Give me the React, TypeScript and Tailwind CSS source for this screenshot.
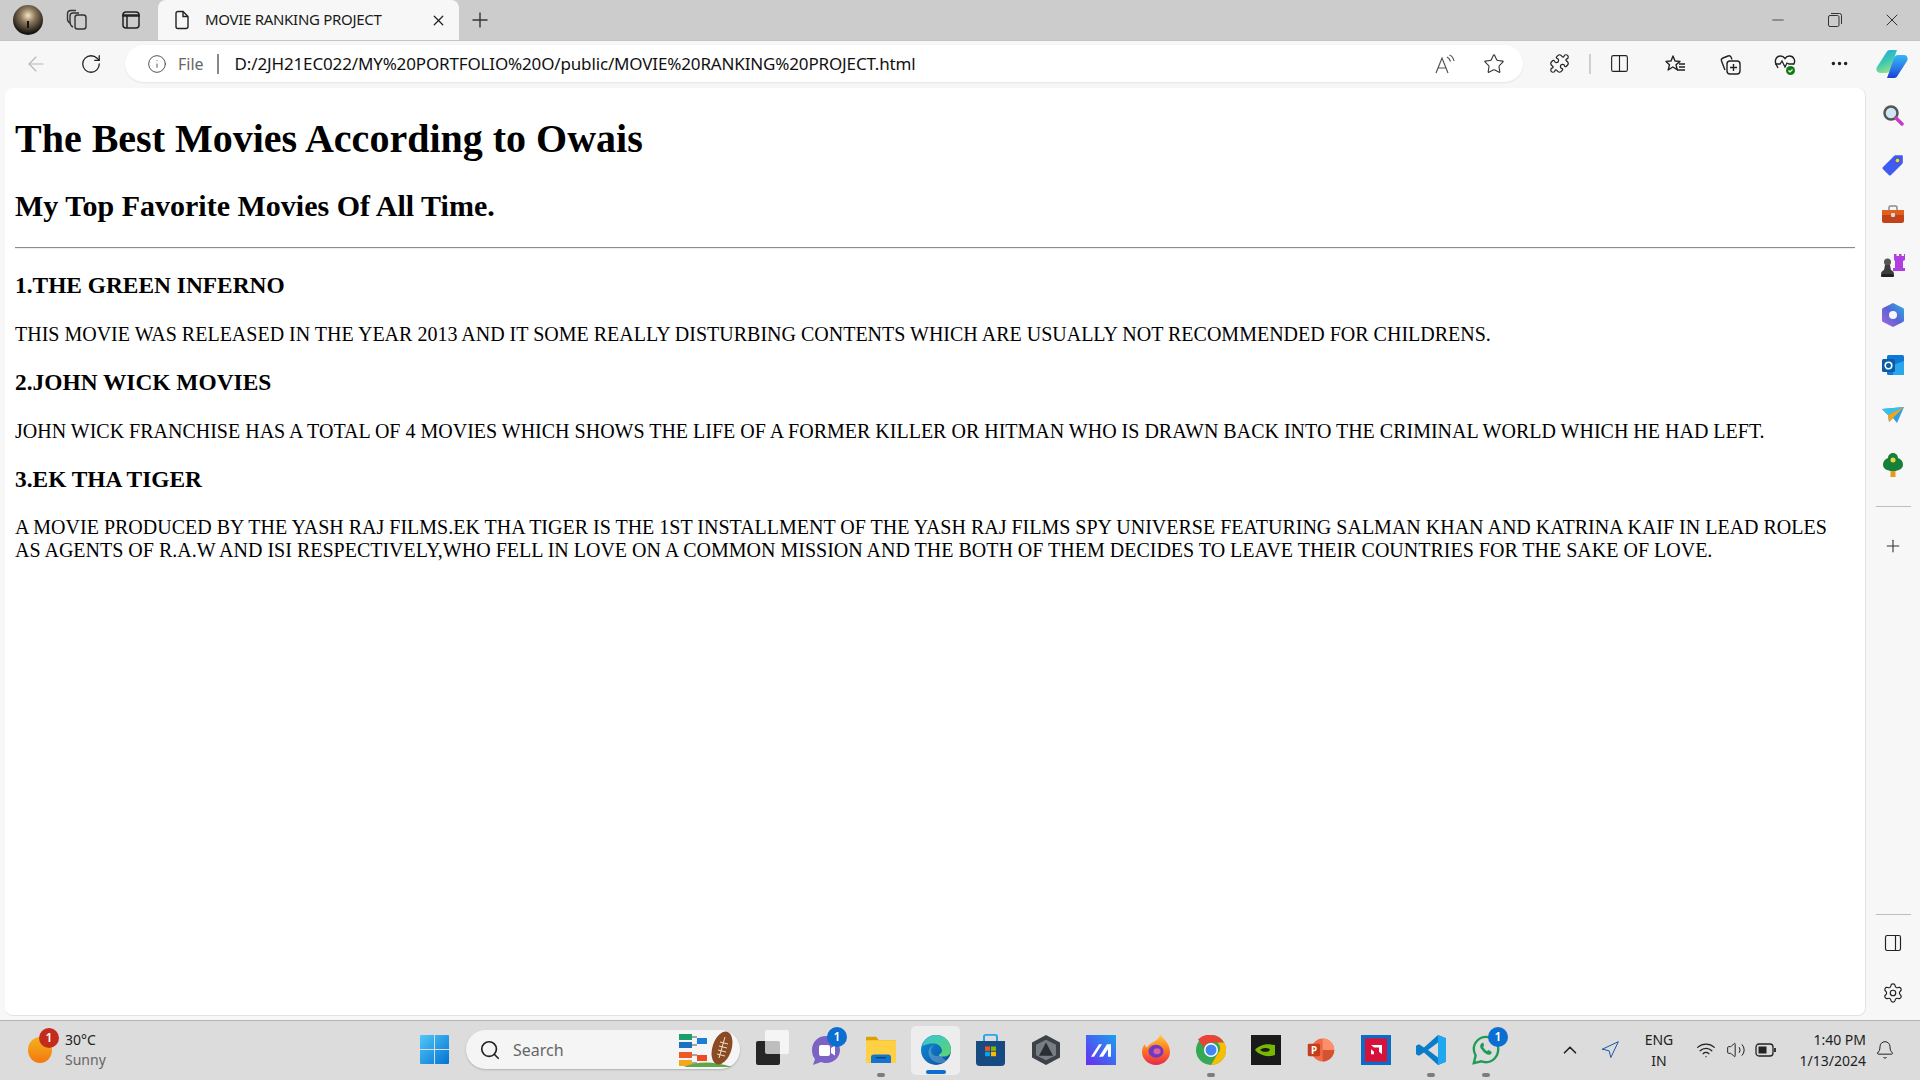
import { ArrowLeft, RotateCw, Info, X, Plus, Minus, Star, Puzzle, Columns2, ChevronUp, Navigation, Wifi, Volume2, Bell, Search, Settings, PanelRight, Ellipsis } from "lucide-react";
import type { ReactNode } from "react";

const ui = "font-['Noto_Sans',sans-serif]";

const Badge = ({ className }: { className: string }) => (
  <span className={`absolute flex h-[20px] w-[20px] items-center justify-center rounded-full text-[12px] font-semibold text-white ${className}`}>1</span>
);

const Slot = ({ w = "w-[55px]", children }: { w?: string; children: ReactNode }) => (
  <div className={`flex h-full shrink-0 items-center justify-center ${w}`}>{children}</div>
);

const Dot = () => <span className="absolute bottom-[1px] left-1/2 h-[4px] w-[8px] -translate-x-1/2 rounded-full bg-[#7d7d7d]" />;

const TaskSlot = ({ children, dot }: { children: ReactNode; dot?: boolean }) => (
  <div className="relative flex h-full w-[55px] shrink-0 items-center justify-center">
    {children}
    {dot && <Dot />}
  </div>
);

const WorkspacesIcon = () => (
  <svg width="24" height="24" viewBox="0 0 24 24" fill="none" stroke="#333" strokeWidth="1.4">
    <rect x="10" y="7" width="11" height="14" rx="2.5" />
    <path d="M8 19c-2-1-3-3-3-5V8c0-2 1-3 3-3h6" />
    <path d="M5 15c-2-1-2.500-2-2.500-4V6c0-2 1-3.500 3.500-3.500h5" />
  </svg>
);

const VerticalTabsIcon = () => (
  <svg width="20" height="20" viewBox="0 0 20 20" fill="none" stroke="#222" strokeWidth="1.5">
    <rect x="2" y="2" width="16" height="16" rx="3" />
    <path d="M2 5h16v1H2z" fill="#222" />
    <path d="M6 6v12" />
  </svg>
);

const PageIcon = () => (
  <svg width="18" height="20" viewBox="0 0 18 20" fill="none" stroke="#222" strokeWidth="1.4">
    <path d="M3 3.500A2 2 0 0 1 5 1.500h5l5 5v10a2 2 0 0 1-2 2H5a2 2 0 0 1-2-2z" />
    <path d="M10 1.500v5h5" />
  </svg>
);

const Avatar = () => (
  <svg width="30" height="30" viewBox="0 0 30 30" className="shrink-0">
    <defs>
      <radialGradient id="av" cx="50%" cy="35%" r="60%">
        <stop offset="0" stopColor="#f6e3c2" />
        <stop offset="0.4" stopColor="#8d7a5f" />
        <stop offset="1" stopColor="#17130e" />
      </radialGradient>
    </defs>
    <ellipse cx="15" cy="15" rx="15" ry="15" fill="url(#av)" />
    <rect x="14" y="16" width="2" height="7" fill="#1a1510" />
  </svg>
);

const ReadAloudIcon = () => (
  <svg width="22" height="22" viewBox="0 0 22 22" fill="none" stroke="#555" strokeWidth="1.2">
    <path d="M2 20 8 5l6 15M4.500 15h7" />
    <path d="M13 4c2 1 3 2.500 3.500 4.500M15.500 2c2.500 1 4 3.500 4.500 6" />
  </svg>
);

const FavListIcon = () => (
  <svg width="22" height="22" viewBox="0 0 22 22" fill="none" stroke="#222" strokeWidth="1.4">
    <path d="M9 3l2 5 5 .4-4 3.300 1.200 5-4.400-2.700-4.600 3 1.300-5.300L2 8.400 7 8z" strokeLinejoin="round" />
    <path d="M15 11h6M15 14h6M13 17h8" />
  </svg>
);

const CollectionsIcon = () => (
  <svg width="22" height="22" viewBox="0 0 22 22" fill="none" stroke="#222" strokeWidth="1.4">
    <rect x="8" y="8" width="13" height="13" rx="3" />
    <path d="M14.500 11v7M11 14.500h7" />
    <path d="M6 17 2.500 8c-.5-1.500.2-2.500 1.500-3l5-2c1.500-.5 2.500 0 3 1l1 2.500" />
  </svg>
);

const HealthIcon = () => (
  <svg width="24" height="24" viewBox="0 0 24 24" fill="none">
    <path d="M5 16 3.500 13C1 9 3 4 7.500 4c2 0 3.500 1 4.500 2.500C13 5 14.500 4 16.500 4 21 4 23 9 20.500 12.500" stroke="#222" strokeWidth="1.4" />
    <path d="M2 12h5l2-3 3 6 2-4 2 1h5" stroke="#222" strokeWidth="1.3" />
    <circle cx="17.500" cy="18.500" r="4.500" fill="#107c10" />
    <path d="M15.500 18.500l1.500 1.500 2.500-2.500" stroke="#fff" strokeWidth="1.200" />
  </svg>
);

const CopilotIcon = () => (
  <svg width="32" height="28" viewBox="0 0 32 28">
    <defs>
      <linearGradient id="cpa" x1="0" y1="0" x2="0.400" y2="1">
        <stop offset="0" stopColor="#1aa3e8" />
        <stop offset="0.6" stopColor="#3fc9b0" />
        <stop offset="1" stopColor="#8fe08a" />
      </linearGradient>
      <linearGradient id="cpb" x1="0.500" y1="0" x2="0.500" y2="1">
        <stop offset="0" stopColor="#35b8f5" />
        <stop offset="0.6" stopColor="#2a76e8" />
        <stop offset="1" stopColor="#1b3fd0" />
      </linearGradient>
    </defs>
    <path d="M10 3c1-2 2-3 4-3h7l-7 20c-1 2-2 3-4 3H4c-3 0-4.500-3-3-6z" fill="url(#cpa)" />
    <path d="M22 25c-1 2-2 3-4 3h-7l7-20c1-2 2-3 4-3h6c3 0 4.500 3 3 6z" fill="url(#cpb)" />
  </svg>
);

const Magnifier = () => (
  <svg width="22" height="22" viewBox="0 0 22 22">
    <circle cx="9" cy="9" r="6.500" fill="#cfe6f5" stroke="#555" strokeWidth="2.500" />
    <path d="M14 14l6 6" stroke="#c43bc4" strokeWidth="3.500" strokeLinecap="round" />
  </svg>
);

const TagIcon = () => (
  <svg width="22" height="22" viewBox="0 0 22 22">
    <path d="M1 13 12 2c.5-.5 1-.7 2-.7h6c.5 0 .8.3.8.8v6c0 1-.2 1.500-.7 2L9 21c-.7.7-1.500.7-2.200 0L1 15.200c-.7-.7-.7-1.500 0-2.200z" fill="#3f5bf2" />
    <circle cx="15.500" cy="6.500" r="2.300" fill="#f5d33a" stroke="#2f3fc0" strokeWidth=".7" />
  </svg>
);

const ToolboxIcon = () => (
  <svg width="24" height="20" viewBox="0 0 24 20">
    <path d="M8 5V2.500C8 1.500 8.500 1 9.500 1h5c1 0 1.500.5 1.500 1.500V5" fill="none" stroke="#8a8a8a" strokeWidth="1.500" />
    <path d="M1 5h22v5H1z" fill="#e2601f" />
    <path d="M1 10h22v6c0 1-1 2-2 2H3c-1 0-2-1-2-2z" fill="#c2431a" />
    <rect x="10" y="8" width="4" height="4" rx="1" fill="#d8d8d8" />
  </svg>
);

const ChessIcon = () => (
  <svg width="24" height="24" viewBox="0 0 24 24">
    <path d="M13 1h2.500v2H18V1h2.500v2H23V1h1v6l-2 1v7h2v3H12v-3h2V8l-1-1z" fill="#b03fe0" />
    <circle cx="6.500" cy="9" r="3.500" fill="#555" />
    <path d="M4 12h5l1 5c2 1 3 2 3 4H0c0-2 1-3 3-4z" fill="#3d3d3d" />
    <rect x="0" y="21" width="13" height="3" rx="1" fill="#222" />
  </svg>
);

const M365Icon = () => (
  <svg width="22" height="24" viewBox="0 0 22 24">
    <defs>
      <linearGradient id="m3" x1="0" y1="1" x2="1" y2="0">
        <stop offset="0" stopColor="#a66bd8" />
        <stop offset="0.5" stopColor="#5a62d8" />
        <stop offset="1" stopColor="#25b5e0" />
      </linearGradient>
    </defs>
    <path d="M11 0 21 5c.7.4 1 1 1 2v10c0 1-.3 1.600-1 2l-10 5L1 19c-.7-.4-1-1-1-2V7c0-1 .3-1.600 1-2z" fill="url(#m3)" />
    <circle cx="11" cy="12" r="4" fill="#f7f7f7" />
  </svg>
);

const OutlookIcon = () => (
  <svg width="22" height="22" viewBox="0 0 22 22">
    <rect x="5" y="1" width="17" height="20" rx="1.500" fill="#0f78d4" />
    <path d="M11 11l11-4v13a1 1 0 0 1-1 1H11z" fill="#28a8ea" />
    <rect x="0" y="5" width="13" height="13" rx="1.500" fill="#0a5ca8" />
    <circle cx="6.500" cy="11.500" r="3.300" fill="none" stroke="#fff" strokeWidth="1.600" />
  </svg>
);

const PlaneIcon = () => (
  <svg width="22" height="16" viewBox="0 0 22 16">
    <path d="M0 2 22 0 15 16l-4-5-4 4-1-7z" fill="#2f9de8" />
    <path d="M0 2 22 0 6 8z" fill="#35c0f0" />
    <path d="M6 8 22 0 7 15z" fill="#f0a51e" />
  </svg>
);

const TreeIcon = () => (
  <svg width="20" height="24" viewBox="0 0 20 24">
    <rect x="7.500" y="16" width="5" height="8" fill="#e79a1a" />
    <path d="M10 0c3 0 5 2.500 5 5 3 1 5 3.500 5 6.500 0 4-3.500 6.500-10 6.500S0 15.500 0 11.500C0 8.500 2 6 5 5c0-2.500 2-5 5-5z" fill="#14803a" />
    <circle cx="10" cy="7" r="2.500" fill="#f5d33a" />
  </svg>
);

const Weather = () => (
  <div className="relative h-[26px] w-[24px] rounded-[50%] bg-gradient-to-b from-[#f2b21e] to-[#f3760f]">
    <Badge className="-right-[7px] -top-[9px] bg-[#c42b1c]" />
  </div>
);

const WindowsLogo = () => (
  <svg width="29" height="29" viewBox="0 0 29 29">
    <defs>
      <linearGradient id="win" x1="0" y1="0" x2="1" y2="1">
        <stop offset="0" stopColor="#4fc8fa" />
        <stop offset="1" stopColor="#0373d2" />
      </linearGradient>
    </defs>
    <path d="M0 1a1 1 0 0 1 1-1h13v14H0zM15 0h13a1 1 0 0 1 1 1v13H15zM0 15h14v14H1a1 1 0 0 1-1-1zM15 15h14v13a1 1 0 0 1-1 1H15z" fill="url(#win)" />
  </svg>
);

const FootballArt = () => (
  <svg width="58" height="38" viewBox="0 0 58 38" className="shrink-0">
    <rect x="0" y="3" width="13" height="6" fill="#18a06c" />
    <rect x="0" y="11" width="13" height="6" fill="#1a73c0" />
    <rect x="18" y="7" width="10" height="6" fill="#1a7fd8" />
    <rect x="0" y="21" width="13" height="6" fill="#ef5a24" />
    <rect x="0" y="29" width="13" height="6" fill="#f2a81e" />
    <rect x="18" y="24" width="10" height="6" fill="#ef4a24" />
    <path d="M13 6h5M13 14h5M13 24h5M13 32h5" stroke="#555" />
    <path d="M5 36c12-6 30-6 48 0z" fill="#5fa84a" />
    <ellipse cx="43" cy="17" rx="9.500" ry="17" fill="#8a4a24" transform="rotate(18 43 17)" />
    <path d="M41 11l8 2M40 15l8 2M39 19l8 2M38 23l8 2M46 6 40 27" stroke="#f0e0c8" strokeWidth="1" />
  </svg>
);

const TaskViewIcon = () => (
  <div className="relative h-[30px] w-[30px]">
    <div className="absolute bottom-0 left-0 h-[24px] w-[24px] rounded-[2px] bg-[#262626]" />
    <div className="absolute right-[-3px] top-[-5px] h-[24px] w-[24px] rounded-[2px] bg-white/70" />
  </div>
);

const MeetIcon = () => (
  <svg width="30" height="32" viewBox="0 0 30 32">
    <path d="M15 2C7 2 1 8 1 16c0 4 1 7 3 9l-2 6 8-3c2 .7 3.500 1 5 1 8 0 14-6 14-13S23 2 15 2z" fill="#7b62c4" />
    <rect x="8" y="11" width="11" height="11" rx="2" fill="#fff" />
    <path d="M20 14l4-2.500v10L20 19z" fill="#fff" />
  </svg>
);

const FolderIcon = () => (
  <svg width="30" height="27" viewBox="0 0 30 32" preserveAspectRatio="none">
    <path d="M0 2a1 1 0 0 1 1-1h9l3 4h17v5H0z" fill="#dca000" />
    <rect x="0" y="5" width="30" height="27" rx="1" fill="#ffd044" />
    <path d="M5 25a3 3 0 0 1 3-3h14a3 3 0 0 1 3 3v7H5z" fill="#1277cc" />
    <rect x="10" y="25" width="10" height="1.500" fill="#0b3f78" />
  </svg>
);

const EdgeIcon = () => (
  <svg width="30" height="30" viewBox="0 0 32 32">
    <defs>
      <linearGradient id="edA" x1="0" y1="0" x2="1" y2="1">
        <stop offset="0" stopColor="#33c6d8" />
        <stop offset="1" stopColor="#5fd46a" />
      </linearGradient>
      <linearGradient id="edB" x1="0" y1="0" x2="1" y2="1">
        <stop offset="0" stopColor="#0f8fdb" />
        <stop offset="1" stopColor="#0a4f9e" />
      </linearGradient>
    </defs>
    <circle cx="16" cy="16" r="16" fill="url(#edB)" />
    <path d="M1 13C3 5 9 0 16 0c9 0 16 7 16 16 0 5-4 7-8 7-3 0-5-1-5-2 3-1 4-4 3-6-1-4-5-6-9-6-6 0-11 2-13 4z" fill="url(#edA)" />
    <path d="M21 21c-4 3-9 1-10-3-1-3 1-6 4-7-4 0-7 3-7 8 0 6 6 11 13 11 3 0 6-1 8-3-3 1-6-2-8-6z" fill="#eee" fillOpacity="0.25" />
  </svg>
);

const StoreIcon = () => (
  <svg width="29" height="32" viewBox="0 0 29 36" preserveAspectRatio="none">
    <path d="M8 8V3a2 2 0 0 1 2-2h9a2 2 0 0 1 2 2v5" fill="none" stroke="#2aa4e8" strokeWidth="2" />
    <path d="M0 8h29v24a4 4 0 0 1-4 4H4a4 4 0 0 1-4-4z" fill="#164a80" />
    <rect x="9" y="14" width="5" height="5" fill="#f25022" />
    <rect x="15" y="14" width="5" height="5" fill="#7fba00" />
    <rect x="9" y="20" width="5" height="5" fill="#00a4ef" />
    <rect x="15" y="20" width="5" height="5" fill="#ffb900" />
  </svg>
);

const HexIcon = () => (
  <svg width="28" height="30" viewBox="0 0 28 32" preserveAspectRatio="none">
    <path d="M14 0 28 8v16l-14 8L0 24V8z" fill="#3c4248" />
    <path d="M14 5 24 10.500v11L14 27 4 21.500v-11z" fill="#777d84" />
    <path d="M14 8 21 22H7z" fill="#2a2d31" />
  </svg>
);

const MIcon = () => (
  <svg width="30" height="30" viewBox="0 0 30 36" preserveAspectRatio="none">
    <defs>
      <linearGradient id="mi" x1="0" y1="1" x2="1" y2="0">
        <stop offset="0" stopColor="#6a2cf0" />
        <stop offset="1" stopColor="#1aa0f0" />
      </linearGradient>
    </defs>
    <rect width="30" height="36" fill="url(#mi)" />
    <path d="M5 26 13 11h3L8 26zM13 26l8-15h4v15h-3v-9l-5 9z" fill="#fff" />
  </svg>
);

const FirefoxIcon = () => (
  <svg width="28" height="31" viewBox="0 0 28 36" preserveAspectRatio="none">
    <defs>
      <linearGradient id="ff" x1="0.500" y1="0" x2="0.500" y2="1">
        <stop offset="0" stopColor="#ffd13a" />
        <stop offset="0.5" stopColor="#ff7a1e" />
        <stop offset="1" stopColor="#e8264e" />
      </linearGradient>
    </defs>
    <path d="M18 0c1 4 10 9 10 21 0 8-6 15-14 15S0 29 0 21c0-4 1-7 3-9 0 2 1 3 2 4 1-4 6-6 8-8 3-2 5-5 5-8z" fill="url(#ff)" />
    <circle cx="14" cy="20" r="7.500" fill="#6d3bc2" />
    <circle cx="15" cy="20" r="3.500" fill="#e0609a" />
  </svg>
);

const ChromeIcon = () => (
  <svg width="30" height="30" viewBox="0 0 30 30">
    <circle cx="15" cy="15" r="15" fill="#34a853" />
    <path d="M15 0a15 15 0 0 1 13 7.500H15a7.500 7.500 0 0 0-7 5L2 4.500A15 15 0 0 1 15 0z" fill="#ea4335" />
    <path d="M28 7.500A15 15 0 0 1 15 30l6.500-11a7.500 7.500 0 0 0 0-11.500z" fill="#fbbc05" />
    <circle cx="15" cy="15" r="7" fill="#fff" />
    <circle cx="15" cy="15" r="5.500" fill="#4285f4" />
  </svg>
);

const NvidiaIcon = () => (
  <svg width="30" height="30" viewBox="0 0 30 36" preserveAspectRatio="none">
    <rect width="30" height="36" fill="#1a1a1a" />
    <path d="M4 18c4-6 12-8 20-6v12c-7 3-15 1-20-6z" fill="#76b900" />
    <path d="M9 18c3-3 7-3 10-1 0 3-6 5-10 1z" fill="#1a1a1a" />
  </svg>
);

const PowerPointIcon = () => (
  <svg width="30" height="30" viewBox="0 0 30 34">
    <circle cx="17" cy="17" r="13" fill="#ed6c47" />
    <path d="M17 4a13 13 0 0 1 13 13H17z" fill="#ff8f6b" />
    <path d="M17 17h13a13 13 0 0 1-13 13z" fill="#d35230" />
    <rect x="0" y="10" width="14" height="14" rx="1.500" fill="#c43e1c" />
    <text x="7" y="21" textAnchor="middle" fontSize="11" fontWeight="700" fill="#fff" fontFamily="Noto Sans, sans-serif">P</text>
  </svg>
);

const AmdIcon = () => (
  <svg width="30" height="30" viewBox="0 0 30 36" preserveAspectRatio="none">
    <rect width="30" height="36" fill="#0a6cc4" />
    <rect x="4" y="4" width="22" height="28" fill="#d6123c" />
    <path d="M10 12h11v11l-3-3v-5h-5zM10 17l3 3v3h-3z" fill="#fff" />
  </svg>
);

const VsCodeIcon = () => (
  <svg width="30" height="30" viewBox="0 0 30 36" preserveAspectRatio="none">
    <path d="M22 0 30 4v28l-8 4L8 21 3 25 0 23v-10l3-2 5 4z" fill="#0a7cc8" />
    <path d="M22 0 30 4v28l-8 4z" fill="#1fa8f0" />
    <path d="M22 9 12 18l10 9z" fill="#dcdcdc" />
  </svg>
);

const WhatsAppIcon = () => (
  <svg width="30" height="32" viewBox="0 0 30 34">
    <path d="M15 3C8 3 2 9 2 16c0 3 1 5 2 7l-2 8 8-2c2 1 3 1 5 1 7 0 13-6 13-14S22 3 15 3z" fill="none" stroke="#1e9c56" strokeWidth="2.500" />
    <path d="M10 10c-1 1-2 3 0 6s5 6 8 6c2 0 3-1 3-3l-3-2-2 1c-2-1-3-3-4-4l1-2-1-3z" fill="#1e9c56" />
  </svg>
);

const BatteryIcon = () => (
  <svg width="22" height="16" viewBox="0 0 22 16" fill="none">
    <rect x="1" y="2" width="17" height="12" rx="3" stroke="#222" strokeWidth="1.300" />
    <rect x="3.500" y="4.500" width="8" height="7" fill="#222" />
    <path d="M20 6v4" stroke="#222" strokeWidth="1.800" />
  </svg>
);

const sideIcons = [Magnifier, TagIcon, ToolboxIcon, ChessIcon, M365Icon, OutlookIcon, PlaneIcon, TreeIcon];

const Page = () => (
  <div className="h-full px-[10px] font-['Liberation_Serif',serif] text-[20px] leading-[23px] text-black">
    <h1 className="mb-[26.8px] pt-[28px] text-[40px] font-bold leading-[46px]">The Best Movies According to Owais</h1>
    <h2 className="mb-[24.2px] mt-[24.9px] text-[30px] font-bold leading-[34px]">My Top Favorite Movies Of All Time.</h2>
    <hr className="my-[10px] border-t-[1px] border-b-[1px] border-t-[#8c8c8c] border-b-[#eeeeee]" />
    <h3 className="mb-[23.4px] mt-[23.4px] text-[23.4px] font-bold leading-[27px]">1.THE GREEN INFERNO</h3>
    <p className="my-[20px]">THIS MOVIE WAS RELEASED IN THE YEAR 2013 AND IT SOME REALLY DISTURBING CONTENTS WHICH ARE USUALLY NOT RECOMMENDED FOR CHILDRENS.</p>
    <h3 className="my-[23.4px] text-[23.4px] font-bold leading-[27px]">2.JOHN WICK MOVIES</h3>
    <p className="my-[20px]">JOHN WICK FRANCHISE HAS A TOTAL OF 4 MOVIES WHICH SHOWS THE LIFE OF A FORMER KILLER OR HITMAN WHO IS DRAWN BACK INTO THE CRIMINAL WORLD WHICH HE HAD LEFT.</p>
    <h3 className="my-[23.4px] text-[23.4px] font-bold leading-[27px]">3.EK THA TIGER</h3>
    <p className="my-[20px]">A MOVIE PRODUCED BY THE YASH RAJ FILMS.EK THA TIGER IS THE 1ST INSTALLMENT OF THE YASH RAJ FILMS SPY UNIVERSE FEATURING SALMAN KHAN AND KATRINA KAIF IN LEAD ROLES AS AGENTS OF R.A.W AND ISI RESPECTIVELY,WHO FELL IN LOVE ON A COMMON MISSION AND THE BOTH OF THEM DECIDES TO LEAVE THEIR COUNTRIES FOR THE SAKE OF LOVE.</p>
  </div>
);

export default function App() {
  return (
    <div className={`flex h-[1080px] w-[1920px] flex-col overflow-hidden bg-[#f7f7f7] ${ui}`}>
      {/* tab strip */}
      <div className="flex h-[40px] shrink-0 items-center bg-[#cccccc] pl-[13px]">
        <Avatar />
        <Slot w="ml-[7px] w-[54px]"><WorkspacesIcon /></Slot>
        <Slot w="w-[53px]"><VerticalTabsIcon /></Slot>
        <div className="ml-px flex h-full w-[301px] items-center rounded-t-[8px] bg-[#f7f7f7] pl-[15px] pr-[12px]">
          <PageIcon />
          <span className="ml-[14px] flex-1 pb-[2px] text-[15px] tracking-[-0.3px] text-[#1a1a1a]">MOVIE RANKING PROJECT</span>
          <X size={17} strokeWidth={1.8} color="#222" />
        </div>
        <Slot w="w-[42px]"><Plus size={24} strokeWidth={1.4} color="#333" /></Slot>
        <div className="flex-1" />
        <Slot w="ml-[-2px] w-[57px]"><Minus size={18} strokeWidth={1.1} color="#333" /></Slot>
        <Slot w="w-[57px]">
          <svg width="14" height="14" viewBox="0 0 14 14" fill="none" stroke="#333" strokeWidth="1">
            <rect x="0.500" y="2.500" width="10.500" height="11" rx="1.500" />
            <path d="M3 .5h8.500a2 2 0 0 1 2 2V11" />
          </svg>
        </Slot>
        <Slot w="w-[57px]"><X size={20} strokeWidth={1.1} color="#222" /></Slot>
      </div>

      {/* address bar row */}
      <div className="flex h-[48px] shrink-0 items-center border-t border-[#c4c4c4] pb-[2px] pl-[8px]">
        <Slot><ArrowLeft size={24} strokeWidth={1.1} color="#b5b5b5" /></Slot>
        <Slot><RotateCw size={22} strokeWidth={1.4} color="#222" /></Slot>
        <div className="ml-[7px] flex h-[37px] w-[1398px] shrink-0 items-center rounded-full bg-white pl-[22px] shadow-[0_1px_2px_rgba(0,0,0,0.08)]">
          <Info size={20} strokeWidth={1.1} color="#444" />
          <span className="ml-[11px] text-[16px] text-[#666]">File</span>
          <span className="ml-[13px] h-[20px] w-[2px] bg-[#888]" />
          <span className="ml-[16px] flex-1 text-[17px] tracking-[-0.15px] text-[#111]">D:/2JH21EC022/MY%20PORTFOLIO%20O/public/MOVIE%20RANKING%20PROJECT.html</span>
          <Slot w="w-[50px]"><ReadAloudIcon /></Slot>
          <Slot w="w-[48px] mr-[5px]"><Star size={22} strokeWidth={1.2} color="#333" /></Slot>
        </div>
        <Slot w="ml-[9px] w-[55px]"><Puzzle size={21} strokeWidth={1.4} color="#222" /></Slot>
        <span className="ml-[2px] h-[20px] w-[2px] bg-[#cfcfcf]" />
        <Slot w="ml-px w-[55px]"><Columns2 size={21} strokeWidth={1.3} color="#222" /></Slot>
        <Slot><FavListIcon /></Slot>
        <Slot><CollectionsIcon /></Slot>
        <Slot><HealthIcon /></Slot>
        <Slot><Ellipsis size={21} strokeWidth={2} color="#222" /></Slot>
        <Slot w="w-[50px]"><CopilotIcon /></Slot>
      </div>

      {/* page + side panel */}
      <div className="flex min-h-0 flex-1 pl-[5px]">
        <div className="h-[928px] w-[1861px] overflow-hidden rounded-[8px] border-b border-r border-[#e2e2e2] bg-white">
          <Page />
        </div>
        <div className="flex flex-1 flex-col items-center pt-[2px]">
          {sideIcons.map((Icon, i) => (
            <div key={i} className="flex h-[50px] items-center justify-center"><Icon /></div>
          ))}
          <div className="mt-[16px] h-px w-[35px] bg-[#bdbdbd]" />
          <div className="mt-[14px] flex h-[50px] items-center"><Plus size={20} strokeWidth={1.3} color="#333" /></div>
          <div className="mt-auto h-px w-[35px] bg-[#bdbdbd]" />
          <div className="mt-[3px] flex h-[50px] items-center"><PanelRight size={20} strokeWidth={1.4} color="#222" /></div>
          <div className="mb-[2px] flex h-[50px] items-center"><Settings size={22} strokeWidth={1.3} color="#222" /></div>
        </div>
      </div>

      {/* taskbar */}
      <div className="flex h-[60px] shrink-0 items-center border-t border-[#b5b5b5] bg-[#dcdcdc] pb-[2px] pl-[28px]">
        <Weather />
        <div className="ml-[13px] w-[355px] text-[14px] leading-[20px]">
          <div className="text-[#222]">30°C</div>
          <div className="text-[#666]">Sunny</div>
        </div>
        <WindowsLogo />
        <div className="ml-[17px] mr-[3px] flex h-[39px] w-[274px] shrink-0 items-center rounded-full bg-[#f5f5f5] pl-[13px] pr-[3px] shadow-[0_1px_2px_rgba(0,0,0,0.2)]">
          <Search size={22} strokeWidth={1.8} color="#222" />
          <span className="ml-[12px] flex-1 text-[16px] text-[#666]">Search</span>
          <FootballArt />
        </div>
        <TaskSlot><TaskViewIcon /></TaskSlot>
        <TaskSlot><MeetIcon /><Badge className="right-[6px] top-[6px] bg-[#0a6fd0]" /></TaskSlot>
        <TaskSlot dot><FolderIcon /></TaskSlot>
        <div className="relative flex h-full w-[55px] shrink-0 items-center justify-center">
          <div className="absolute inset-x-[3px] bottom-[3px] top-[5px] rounded-[5px] bg-[#ededed]" />
          <div className="relative"><EdgeIcon /></div>
          <span className="absolute bottom-[4px] left-1/2 h-[4px] w-[20px] -translate-x-1/2 rounded-full bg-[#0a6fd0]" />
        </div>
        <TaskSlot><StoreIcon /></TaskSlot>
        <TaskSlot><HexIcon /></TaskSlot>
        <TaskSlot><MIcon /></TaskSlot>
        <TaskSlot><FirefoxIcon /></TaskSlot>
        <TaskSlot dot><ChromeIcon /></TaskSlot>
        <TaskSlot><NvidiaIcon /></TaskSlot>
        <TaskSlot><PowerPointIcon /></TaskSlot>
        <TaskSlot><AmdIcon /></TaskSlot>
        <TaskSlot dot><VsCodeIcon /></TaskSlot>
        <TaskSlot dot><WhatsAppIcon /><Badge className="right-[5px] top-[6px] bg-[#0a6fd0]" /></TaskSlot>
        <Slot w="ml-[30px] w-[54px]"><ChevronUp size={22} strokeWidth={1.8} color="#222" /></Slot>
        <Slot w="w-[26px]"><Navigation size={20} strokeWidth={1.2} color="#1a56a8" /></Slot>
        <div className="ml-[11px] w-[50px] text-center text-[14px] leading-[21px] text-[#222]">ENG<br />IN</div>
        <Slot w="ml-[7px] w-[30px]"><Wifi size={20} strokeWidth={1.5} color="#222" /></Slot>
        <Slot w="w-[30px]"><Volume2 size={20} strokeWidth={1.2} color="#222" /></Slot>
        <Slot w="w-[30px]"><BatteryIcon /></Slot>
        <div className="w-[85px] text-right text-[14px] leading-[21px] text-[#222]">1:40 PM<br />1/13/2024</div>
        <Slot w="ml-[5px] w-[28px]"><Bell size={20} strokeWidth={1.2} color="#222" /></Slot>
      </div>
    </div>
  );
}
